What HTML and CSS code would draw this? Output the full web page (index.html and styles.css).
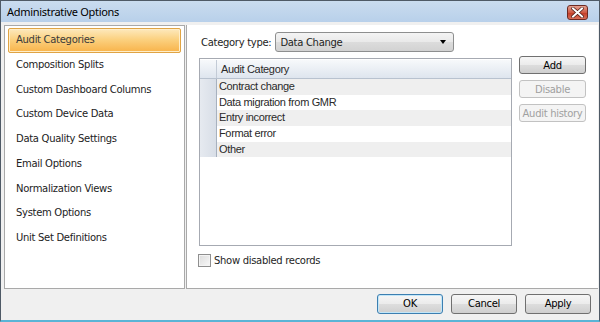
FILE: index.html
```html
<!DOCTYPE html>
<html lang="en">
<head>
  <meta charset="UTF-8" />
  <title>Administrative Options</title>
  <link rel="stylesheet" href="styles.css">
</head>
<body>
  <!-- ============================
       Dialog Window
       ============================ -->
  <div class="window">
    <div class="titlebar">
      <span class="title">Administrative Options</span>
      <button class="close-btn" aria-label="Close">
        <svg width="13" height="11" viewBox="0 0 13 11">
          <path d="M2 1.5 L11 9.5 M11 1.5 L2 9.5" stroke="#4a1a14" stroke-width="3.4" stroke-linecap="square"/>
          <path d="M2 1.5 L11 9.5 M11 1.5 L2 9.5" stroke="#ffffff" stroke-width="2" stroke-linecap="square"/>
        </svg>
      </button>
    </div>

    <div class="content">
      <!-- Left option list -->
      <ul class="option-list">
        <li class="selected">Audit Categories</li>
        <li>Composition Splits</li>
        <li>Custom Dashboard Columns</li>
        <li>Custom Device Data</li>
        <li>Data Quality Settings</li>
        <li>Email Options</li>
        <li>Normalization Views</li>
        <li>System Options</li>
        <li>Unit Set Definitions</li>
      </ul>

      <!-- Right settings panel -->
      <div class="panel">
        <div class="type-row">
          <label>Category type:</label>
          <div class="combo">
            <span>Data Change</span>
            <span class="arrow"></span>
          </div>
        </div>

        <div class="grid-row">
          <div class="grid">
            <div class="grid-head">
              <div class="row-head"></div>
              <div class="col-head">Audit Category</div>
            </div>
            <div class="grid-line alt"><div class="row-head"></div><div class="cell">Contract change</div></div>
            <div class="grid-line"><div class="row-head"></div><div class="cell">Data migration from GMR</div></div>
            <div class="grid-line alt"><div class="row-head"></div><div class="cell">Entry incorrect</div></div>
            <div class="grid-line"><div class="row-head"></div><div class="cell">Format error</div></div>
            <div class="grid-line alt"><div class="row-head"></div><div class="cell">Other</div></div>
          </div>

          <div class="side-buttons">
            <button class="btn">Add</button>
            <button class="btn" disabled>Disable</button>
            <button class="btn" disabled>Audit history</button>
          </div>
        </div>

        <label class="check-row">
          <span class="checkbox"></span>
          Show disabled records
        </label>
      </div>
    </div>

    <div class="footer">
      <button class="btn footer-btn default">OK</button>
      <button class="btn footer-btn">Cancel</button>
      <button class="btn footer-btn">Apply</button>
    </div>
  </div>
</body>
</html>
```

FILE: styles.css
```css
/* ============================
   Basic Reset
   ============================ */
* {
  margin: 0;
  padding: 0;
  box-sizing: border-box;
}

body {
  width: 600px;
  height: 322px;
  overflow: hidden;
  font-family: "DejaVu Sans", Tahoma, sans-serif;
  font-size: 10px;
  letter-spacing: -0.3px;
  color: #1e1e1e;
}

/* ============================
   Window Frame
   ============================ */
.window {
  width: 600px;
  height: 322px;
  display: flex;
  flex-direction: column;
  background-color: #f0f0f0;
  border: 1px solid #4f5a66;
  border-bottom: 2px solid #5ab4d6;
}

.titlebar {
  height: 21px;
  display: flex;
  align-items: center;
  justify-content: space-between;
  padding: 0 11px 0 6px;
  background: linear-gradient(#cadcef, #b8d0ea);
}

.title {
  font-family: "Noto Sans", "Segoe UI", sans-serif;
  font-size: 11px;
  letter-spacing: -0.3px;
  color: #000;
}

.close-btn {
  width: 21px;
  height: 15px;
  margin-top: 2px;
  display: flex;
  align-items: center;
  justify-content: center;
  border: 1px solid #6d2a22;
  border-radius: 3px;
  background: linear-gradient(#e4a190, #cf5a44 50%, #c23a24 51%, #d8705a);
}

/* ============================
   Main Content
   ============================ */
.content {
  flex: 1;
  display: flex;
  gap: 1px;
  padding: 3px 1px 0 3px;
}

.option-list {
  width: 181px;
  list-style: none;
  background-color: #fff;
  border: 1px solid #a9a9a9;
  padding: 2px 3px;
}

.option-list li {
  height: 24.75px;
  line-height: 21px;
  padding-left: 7px;
  border: 1px solid transparent;
  color: #222;
}

.option-list li.selected {
  border-color: #e0a444;
  border-radius: 2px;
  background: linear-gradient(#fde9bd, #fbd180 45%, #f8b34a 100%);
  color: #3a3a3a;
  box-shadow: inset 0 0 0 1px #ffeeca;
}

.panel {
  flex: 1;
  display: flex;
  flex-direction: column;
  background-color: #fff;
  border-left: 1px solid #a9a9a9;
  border-bottom: 1px solid #a9a9a9;
  padding: 7px 12px 0 12px;
}

/* ============================
   Category Type Row
   ============================ */
.type-row {
  display: flex;
  align-items: center;
  gap: 4px;
  padding-left: 2px;
  height: 20px;
}

.combo {
  width: 179px;
  height: 20px;
  display: flex;
  align-items: center;
  justify-content: space-between;
  padding: 0 7px 0 4px;
  border: 1px solid #8e8f8f;
  border-radius: 3px;
  background: linear-gradient(#f4f4f4, #e9e9e9 50%, #dcdcdc 51%, #d2d2d2);
}

.arrow {
  width: 0;
  height: 0;
  border-left: 3.5px solid transparent;
  border-right: 3.5px solid transparent;
  border-top: 4px solid #000;
}

/* ============================
   Audit Category Grid
   ============================ */
.grid-row {
  display: flex;
  gap: 7px;
  margin-top: 6px;
}

.grid {
  width: 313px;
  height: 188px;
  border: 1px solid #a6aab2;
  font-family: "Liberation Sans", Arial, sans-serif;
  font-size: 11px;
  letter-spacing: -0.35px;
  color: #2a2a2a;
}

.grid-head,
.grid-line {
  display: flex;
}

.grid-head {
  height: 19px;
  margin-top: 1px;
  background: linear-gradient(#f7f9fb, #dee5ee);
  border-bottom: 1px solid #b8c2cf;
}

.col-head {
  flex: 1;
  padding-left: 4px;
  line-height: 18px;
  border-left: 1px solid #c3cbd6;
}

.row-head {
  width: 16px;
  background: linear-gradient(90deg, #e6eaf0, #d8dee7);
}

.grid-head .row-head {
  background: none;
}

.grid-line {
  height: 15.7px;
}

.cell {
  flex: 1;
  padding-left: 2px;
  line-height: 15px;
  border-left: 1px solid #a7b1bf;
}

.grid-line.alt .cell {
  background-color: #efefef;
}

/* ============================
   Buttons
   ============================ */
.side-buttons {
  display: flex;
  flex-direction: column;
  gap: 6px;
  margin-top: -2px;
}

.btn {
  width: 67px;
  height: 18px;
  font-family: "DejaVu Sans", Tahoma, sans-serif;
  font-size: 10px;
  letter-spacing: -0.3px;
  color: #000;
  border: 1px solid #707070;
  border-radius: 3px;
  background: linear-gradient(#f6f6f6, #ebebeb 50%, #dddddd 51%, #cfcfcf);
}

.btn:disabled {
  color: #a0a0a0;
  border-color: #c2c2c2;
  background: #f4f4f4;
}

.footer {
  height: 31px;
  display: flex;
  justify-content: flex-end;
  align-items: center;
  gap: 8px;
  padding: 0 8px 2px 0;
}

.footer-btn {
  width: 66px;
  height: 20px;
}

.footer-btn.default {
  border-color: #3c7fb1;
  box-shadow: inset 0 0 0 1px #c2e6f8;
}

/* ============================
   Show Disabled Checkbox
   ============================ */
.check-row {
  display: flex;
  align-items: center;
  gap: 3px;
  margin-top: 8px;
}

.checkbox {
  width: 13px;
  height: 13px;
  margin-left: -1px;
  border: 1px solid #8f8f8f;
  background: linear-gradient(135deg, #dcdcdc, #f8f8f8);
  box-shadow: inset 0 0 0 1px #f4f4f4;
}
```
